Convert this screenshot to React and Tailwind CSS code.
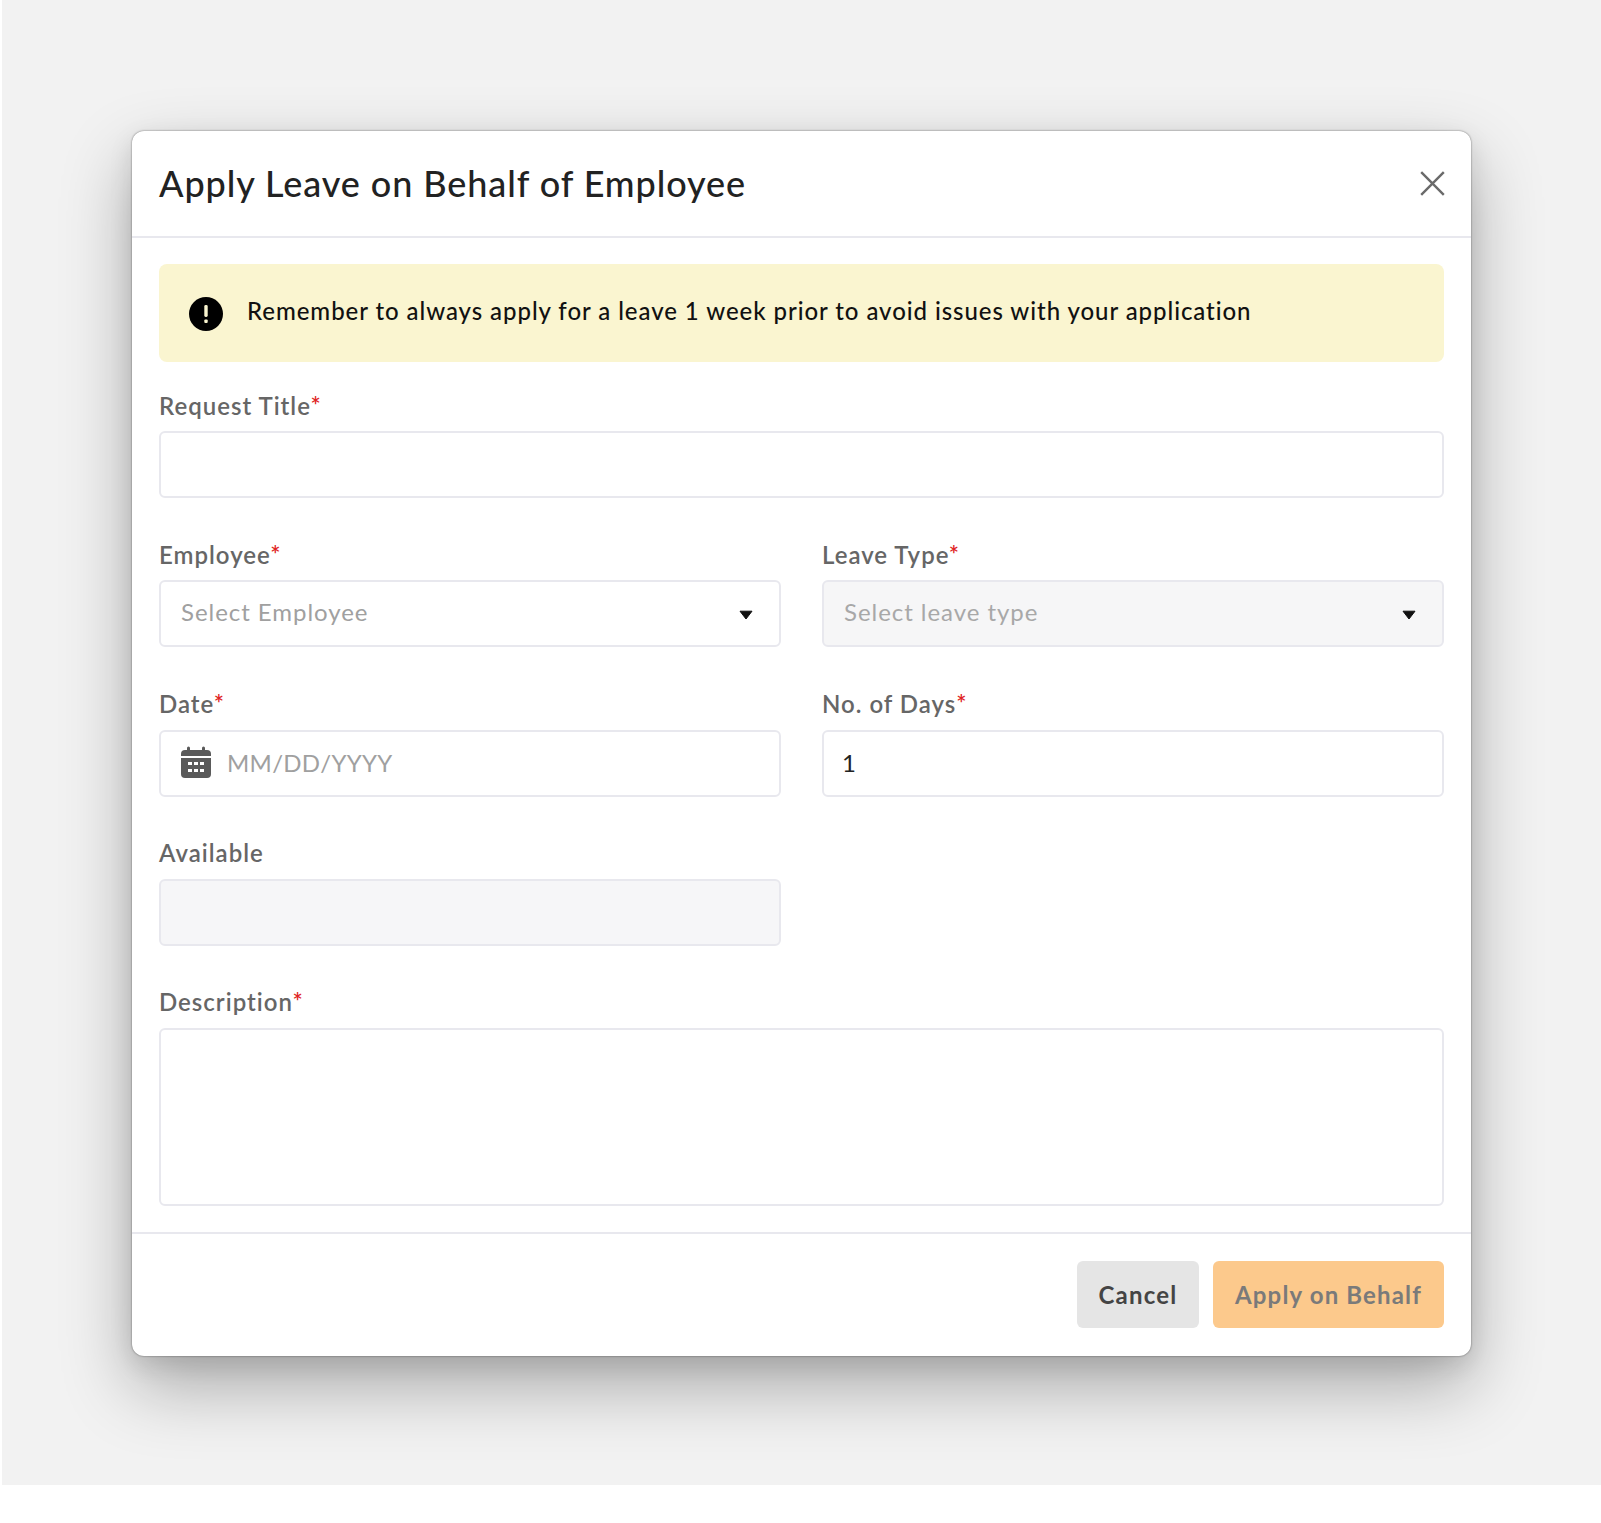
const fontCls = "font-['Lato','Noto_Sans',sans-serif]";

const Label = ({ text, required }) => (
  <label className="block h-[24px] leading-[24px] text-[24px] font-semibold text-[#666666] tracking-[1px]">
    {text}
    {required && <span className="text-[#e02424]">*</span>}
  </label>
);

const Caret = () => (
  <svg width="14" height="10" viewBox="0 0 14 10" className="shrink-0 mt-[2px]">
    <path d="M1 1.2 H13 L7 9 Z" fill="#111111" stroke="#111111" strokeLinejoin="round" />
  </svg>
);

const CalendarIcon = () => (
  <svg width="32" height="32" viewBox="0 0 32 32" className="shrink-0 mb-[3px]">
    <rect x="7" y="0.5" width="3" height="6" rx="1.5" fill="#5a5a5a" />
    <rect x="22" y="0.5" width="3" height="6" rx="1.5" fill="#5a5a5a" />
    <path d="M1 8 a4 4 0 0 1 4-4 H27 a4 4 0 0 1 4 4 V10 H1 Z" fill="#5a5a5a" />
    <path d="M1 12 H31 V28 a4 4 0 0 1-4 4 H5 a4 4 0 0 1-4-4 Z" fill="#5a5a5a" />
    {[8, 14, 20].map((x) => (
      <g key={x} fill="#ffffff">
        <rect x={x} y="16" width="4" height="3" />
        <rect x={x} y="23" width="4" height="3" />
      </g>
    ))}
  </svg>
);

const inputBase =
  "w-full h-[67px] rounded-[6px] border-2 border-[#e8e8ee] px-[20px] text-[24px] outline-none";

const Select = ({ placeholder, disabled }) => (
  <div
    className={`flex items-center justify-between h-[67px] rounded-[6px] border-2 border-[#e8e8ee] pl-[20px] pr-[26px] ${
      disabled ? "bg-[#f6f6f7] text-[#a8a8a8]" : "bg-white text-[#a0a0a0]"
    }`}
  >
    <span className="text-[24px] tracking-[0.95px] pb-[4px]">{placeholder}</span>
    <Caret />
  </div>
);

export default function App() {
  return (
    <div className={`w-[1601px] h-[1523px] bg-white ${fontCls}`}>
      <div className="ml-[2px] h-[1485px] bg-[#f2f2f2] overflow-hidden pt-[131px] pl-[130px]">
        <div className="w-[1339px] h-[1225px] bg-white rounded-[12px] flex flex-col shadow-[0_0_2px_rgba(0,0,0,0.55),0_8px_24px_rgba(0,0,0,0.1),0_30px_70px_rgba(0,0,0,0.3)]">
          <div className="flex items-center justify-between h-[107px] border-b-2 border-[#e8e8ee] pl-[27px] pr-[26px]">
            <h1 className="text-[36px] leading-[44px] font-medium text-[#222222] tracking-[0.92px] pb-[2px]">
              Apply Leave on Behalf of Employee
            </h1>
            <button aria-label="Close">
              <svg width="25" height="25" viewBox="0 0 25 25" className="block">
                <path d="M1.2 1.2 L23.8 23.8 M23.8 1.2 L1.2 23.8" stroke="#6a6a6a" strokeWidth="2.4" fill="none" />
              </svg>
            </button>
          </div>

          <div className="flex-1 px-[27px] pt-[26px]">
            <div className="flex items-center h-[98px] rounded-[8px] bg-[#faf5d0] pl-[30px] gap-[24px]">
              <svg width="34" height="34" viewBox="0 0 34 34" className="shrink-0 mt-[2px]">
                <circle cx="17" cy="17" r="17" fill="#000000" />
                <rect x="15.3" y="8" width="3.4" height="12" rx="1.4" fill="#faf5d0" />
                <rect x="15.3" y="22.5" width="3.4" height="3.5" rx="1" fill="#faf5d0" />
              </svg>
              <p className="text-[24px] font-medium text-[#111111] pb-[4px] tracking-[0.94px]">
                Remember to always apply for a leave 1 week prior to avoid issues with your application
              </p>
            </div>

            <div className="mt-[32px]">
              <Label text="Request Title" required />
              <input className={`${inputBase} mt-[13px] block`} />
            </div>

            <div className="grid grid-cols-[622px_622px] gap-x-[41px] mt-[45px]">
              <div>
                <Label text="Employee" required />
                <div className="mt-[13px]">
                  <Select placeholder="Select Employee" />
                </div>
              </div>
              <div>
                <Label text="Leave Type" required />
                <div className="mt-[13px]">
                  <Select placeholder="Select leave type" disabled />
                </div>
              </div>

              <div className="mt-[45px]">
                <Label text="Date" required />
                <div className="mt-[14px] flex items-center gap-[15px] h-[67px] rounded-[6px] border-2 border-[#e8e8ee] pl-[19px]">
                  <CalendarIcon />
                  <input
                    placeholder="MM/DD/YYYY"
                    className="flex-1 min-w-0 text-[24px] tracking-[0.3px] mb-[1px] outline-none placeholder:text-[#a0a0a0]"
                  />
                </div>
              </div>
              <div className="mt-[45px]">
                <Label text="No. of Days" required />
                <input defaultValue="1" className={`${inputBase} mt-[14px] block !pl-[18px] pb-[2px] text-[#222222]`} />
              </div>

              <div className="mt-[44px]">
                <Label text="Available" />
                <input disabled className={`${inputBase} mt-[14px] block bg-[#f6f6f8]`} />
              </div>
            </div>

            <div className="mt-[44px]">
              <Label text="Description" required />
              <textarea className={`${inputBase} mt-[14px] block !h-[178px] resize-none`} />
            </div>
          </div>

          <div className="flex justify-end gap-[14px] border-t-2 border-[#e8e8ee] h-[124px] pt-[27px] px-[27px]">
            <button className="w-[122px] h-[67px] rounded-[6px] bg-[#e5e5e5] text-[24px] font-bold text-[#444444] tracking-[1.2px]">
              Cancel
            </button>
            <button className="w-[231px] h-[67px] rounded-[6px] bg-[#fcc98c] text-[24px] font-bold text-[#7a7a7a] tracking-[1.15px]">
              Apply on Behalf
            </button>
          </div>
        </div>
      </div>
    </div>
  );
}
